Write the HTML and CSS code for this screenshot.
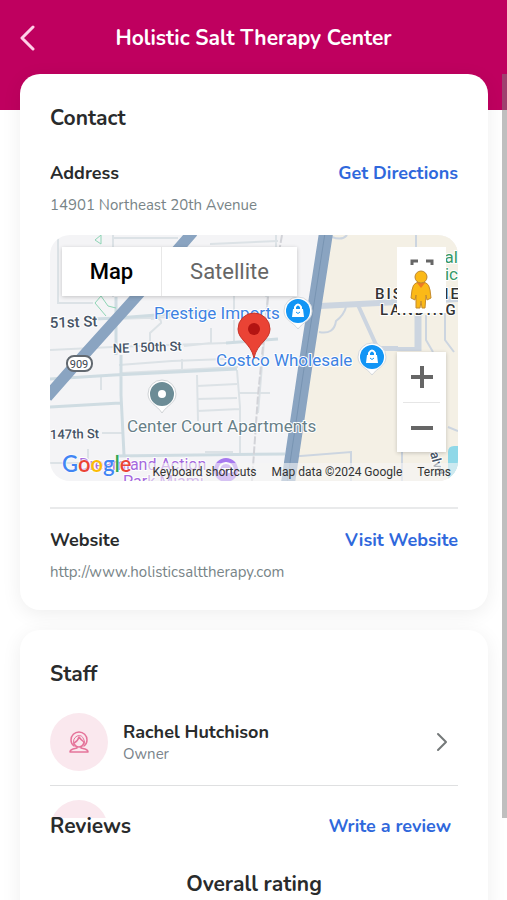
FILE: index.html
```html
<!DOCTYPE html>
<html lang="en">
<head>
    <meta charset="UTF-8">
    <meta name="viewport" content="width=device-width, initial-scale=1.0">
    <title>Holistic Salt Therapy Center</title>
    <link rel="stylesheet" href="styles.css">
</head>
<body>
    <div class="page">
        <header class="header">
            <div class="header-bar">
                <button class="back-button" type="button" aria-label="Back">
                    <svg width="16" height="26" viewBox="0 0 16 26"><path d="M13 2 2 13l11 11" fill="none" stroke="#ffd0e8" stroke-width="3" stroke-linecap="round" stroke-linejoin="round"/></svg>
                </button>
                <h1 class="header-title">Holistic Salt Therapy Center</h1>
            </div>
        </header>

        <main class="content">
            <!-- Contact -->
            <section class="card">
                <h2 class="card-title">Contact</h2>

                <div class="info-row">
                    <h3 class="info-title">Address</h3>
                    <a class="action-link" href="#directions">Get Directions</a>
                </div>
                <p class="info-text">14901 Northeast 20th Avenue</p>

                <div class="map">
                    <svg class="map-canvas" viewBox="0 0 408 246" preserveAspectRatio="xMidYMid slice">
                        <rect width="408" height="246" fill="#f4f4f6"/>
                        <path d="M275 0H408V246H238L255 125Z" fill="#f4f0e5"/>

                        <!-- small streets -->
                        <g fill="none" stroke="#dce2e6" stroke-width="2">
                            <path d="M63 0V62M8 4V68H43M64 3H128M160 9 228 6M0 115 63 112 176 108M66 84 122 82M69 130 122 126 176 124M101 84Q112 82 111 88L100 98V108M161 93V108L134 111M132 124V138M72 138 188 132M51 142V155M184 60V108M147 140 148 186M147 151 187 149M147 164 187 163M147 176 190 174M187 135 190 172V218M188 158H220M52 198H72M38 214V224M0 228H32M155 217H183M218 60 208 178M226 0V22L216 62"/>
                        </g>
                        <g fill="none" stroke="#cfdce2" stroke-width="3">
                            <path d="M0 144 64 140 187 134M0 172 70 168M71 120V160L74 220M66 62V120M44 84 67 83 160 76M66 221 235 219M176 108 228 104"/>
                        </g>
                        <g fill="none" stroke="#ccd5e0" stroke-width="2">
                            <path d="M366 0V70M395 75V105L404 117M376 80V105L383 117M238 222 301 217V246M352 215V246M398 192 408 196M328 112H348M269 97Q284 100 286 86Q294 80 296 72M282 2Q292 6 297 0"/>
                            <path d="M308 70 328 114H366" stroke-width="4"/>
                            <path d="M270 71 408 64" stroke-width="6"/>
                            <path d="M368 70V116" stroke-width="7"/>
                        </g>
                        <path d="M51 0 45 5 51 9ZM51 61 45 68 56 81M51 61 58 71 66 73" fill="none" stroke="#8dd4b4" stroke-width="1"/>
                        <path d="M218 62 208 160 202 246M232 0 225 40" fill="none" stroke="#d2d3d8" stroke-width="2" stroke-dasharray="8 2"/>

                        <!-- highways -->
                        <path d="M143-3 88 60 34 120-3 162" fill="none" stroke="#8aa4c1" stroke-width="11"/>
                        <path d="M276-2 257 120 238 248" fill="none" stroke="#8aa4c1" stroke-width="14"/>
                        <path d="M275-2 256 120 237 248" fill="none" stroke="#7894b2" stroke-width="1"/>
                        <path d="M398 246V217Q398 211 404 211H408V246Z" fill="#8fd8e8"/>

                        <g class="label-street">
                            <text x="0" y="93" font-size="15" transform="rotate(-2 0 93)">51st St</text>
                            <text x="63" y="118" font-size="13" transform="rotate(-2 63 118)">NE 150th St</text>
                            <text x="0" y="204" font-size="13" transform="rotate(-1 0 204)">147th St</text>
                            <text x="380" y="218" font-size="13" transform="rotate(75 380 218)">alvd</text>
                        </g>
                        <rect x="17" y="121" width="25" height="15" rx="7" fill="#fff" stroke="#626970" stroke-width="2"/>
                        <text x="29" y="133" class="label-shield">909</text>

                        <g class="label-area">
                            <text x="325" y="64">BISCAYNE</text>
                            <text x="330" y="80">LANDING</text>
                        </g>
                        <g class="label-park">
                            <text x="408" y="28">al</text>
                            <text x="408" y="45">ic</text>
                        </g>

                        <g class="label-shop">
                            <text x="104" y="84">Prestige Imports</text>
                            <text x="166" y="131">Costco Wholesale</text>
                        </g>
                        <text x="77" y="197" class="label-home">Center Court Apartments</text>
                        <g class="label-fun">
                            <text x="29" y="235">Dreamland Action</text>
                            <text x="73" y="252">Park Miami</text>
                        </g>

                        <!-- place pins -->
                        <g id="shop-pin">
                            <path d="M248 62A14 14 0 0 1 262 76C262 85 253 87 248 94 243 87 234 85 234 76A14 14 0 0 1 248 62Z" fill="#fff" stroke="#d5d8dc"/>
                            <circle cx="248" cy="76" r="12" fill="#1295f5"/>
                            <path d="M243 74H253L254 82H242Z" fill="#fff"/>
                            <path d="M245 75V72Q248 67 251 72V75" fill="none" stroke="#fff" stroke-width="2"/>
                            <path d="M246 77Q248 80 250 77" fill="none" stroke="#1295f5"/>
                        </g>
                        <use href="#shop-pin" x="74" y="46"/>
                        <path d="M112 145A14 14 0 0 1 126 159C126 168 117 170 112 178 107 170 98 168 98 159A14 14 0 0 1 112 145Z" fill="#fff" stroke="#d0d3d6"/>
                        <circle cx="112" cy="159" r="8" fill="none" stroke="#6c8c96" stroke-width="8"/>
                        <circle cx="176" cy="235" r="12" fill="#a779ef"/>
                        <path d="M169 237Q169 228 176 228T183 237M173 238V234H179V238" fill="none" stroke="#fff" stroke-width="2"/>
                        <path d="M204 78A16 16 0 0 1 220 94C220 105 207 108 204 123 201 108 188 105 188 94A16 16 0 0 1 204 78Z" fill="#ea4335" stroke="#c5352b"/>
                        <circle cx="204" cy="94" r="6" fill="#b31412"/>
                    </svg>

                    <div class="map-types">
                        <button class="map-type active" type="button">Map</button>
                        <button class="map-type" type="button">Satellite</button>
                    </div>

                    <button class="map-pegman" type="button" aria-label="Street view">
                        <svg width="49" height="66" viewBox="0 0 49 66">
                            <path d="M15 18V14H21M29 14H35V18" fill="none" stroke="#666" stroke-width="3"/>
                            <path d="M19 36Q24 33 29 36Q32 37 33 43L34 51 30 53 29 48 28 61H25L24 54 23 61H19L19 48 18 53 14 51 15 43Q16 37 19 36Z" fill="#fbb917" stroke="#c48b2e"/>
                            <path d="M20 36 24 41 28 36Z" fill="#ee7b22"/>
                            <circle cx="24" cy="30" r="6" fill="#fbb917" stroke="#bd862f"/>
                        </svg>
                    </button>

                    <div class="map-zoom">
                        <button class="zoom-button" type="button" aria-label="Zoom in">
                            <svg width="24" height="24" viewBox="0 0 24 24"><path d="M1 12H23M12 1V23" stroke="#666" stroke-width="4"/></svg>
                        </button>
                        <button class="zoom-button" type="button" aria-label="Zoom out">
                            <svg width="24" height="24" viewBox="0 0 24 24"><path d="M1 12H23" stroke="#666" stroke-width="4"/></svg>
                        </button>
                    </div>

                    <a class="map-logo" href="#google"><span class="blue">G</span><span class="red">o</span><span class="yellow">o</span><span class="blue">g</span><span class="green">l</span><span class="red">e</span></a>
                    <div class="map-legal">
                        <button class="legal-item" type="button">Keyboard shortcuts</button>
                        <span class="legal-item">Map data ©2024 Google</span>
                        <a class="legal-item" href="#terms">Terms</a>
                    </div>
                </div>

                <hr class="divider">

                <div class="info-row">
                    <h3 class="info-title">Website</h3>
                    <a class="action-link" href="#website">Visit Website</a>
                </div>
                <p class="info-text">http://www.holisticsalttherapy.com</p>
            </section>

            <!-- Staff and reviews -->
            <section class="card">
                <h2 class="card-title">Staff</h2>
                <ul class="staff-list">
                    <li>
                        <a class="staff-row" href="#staff">
                            <span class="avatar">
                                <svg width="20" height="22" viewBox="0 0 20 22" fill="none" stroke="#e5749a" stroke-linecap="round" stroke-linejoin="round">
                                    <path d="M5 15Q2 13 2 9A8 8 0 0 1 18 9Q18 13 15 15" stroke-width="1.5"/>
                                    <path d="M5 14Q3 8 8 5Q13 3 15 9L16 13"/>
                                    <path d="M5 12Q9 10 10 6Q12 9 15 11Q14 16 10 16T5 12Z" stroke-width="1.5"/>
                                    <path d="M8 16V17L4 18Q1 19 1 21H19Q19 19 16 18L12 17V16" stroke-width="1.5"/>
                                </svg>
                            </span>
                            <span class="staff-info">
                                <span class="staff-name">Rachel Hutchison</span>
                                <span class="staff-role">Owner</span>
                            </span>
                            <svg class="chevron" width="14" height="22" viewBox="0 0 14 22"><path d="M3 3 11 11 3 19" fill="none" stroke="#747879" stroke-width="2" stroke-linecap="round" stroke-linejoin="round"/></svg>
                        </a>
                    </li>
                    <li>
                        <a class="staff-row" href="#staff-next" aria-label="Next staff member">
                            <span class="avatar"></span>
                        </a>
                    </li>
                </ul>

                <div class="reviews-row">
                    <h2 class="card-title">Reviews</h2>
                    <a class="action-link" href="#review">Write a review</a>
                </div>
                <h2 class="rating-title">Overall rating</h2>
            </section>
        </main>
        <div class="scroll-thumb"></div>
    </div>
</body>
</html>
```
FILE: styles.css
```css
* {
    box-sizing: border-box;
}
body {
    margin: 0;
    font-family: Nunito, Lato, sans-serif;
    color: #292b2c;
    background-color: #fff;
}
h1, h2, h3, p, ul {
    margin: 0;
    padding: 0;
}
button {
    padding: 0;
    border: none;
    background: none;
    cursor: pointer;
}
a {
    text-decoration: none;
}
.page {
    position: relative;
    height: 100vh;
    overflow: hidden;
}
.header {
    height: 110px;
    background-color: #bf005f;
}
.header-bar {
    display: grid;
    grid-template-columns: 36px 1fr 36px;
    align-items: center;
    height: 76px;
    padding: 0 20px;
}
.back-button {
    display: flex;
}
.header-title {
    font-size: 21px;
    line-height: 28px;
    font-weight: 700;
    text-align: center;
    color: #fff;
}
.content {
    display: flex;
    flex-direction: column;
    gap: 20px;
    margin-top: -36px;
    padding: 0 19px 0 20px;
}
.card {
    padding: 30px 30px 28px;
    border-radius: 20px;
    background-color: #fff;
    box-shadow: 0 4px 20px rgba(0, 0, 0, 0.07);
}
.card-title, .rating-title {
    font-size: 21px;
    line-height: 28px;
    font-weight: 700;
}
.info-row {
    display: flex;
    justify-content: space-between;
    align-items: center;
}
.card-title + .info-row {
    margin-top: 29px;
}
.info-title, .action-link, .staff-name {
    font-size: 18px;
    line-height: 24px;
    font-weight: 700;
}
.action-link {
    color: #2f68dc;
}
.info-text {
    margin-top: 10px;
    font-size: 15px;
    line-height: 20px;
    color: #788487;
}
.divider {
    height: 2px;
    margin: 26px 0 19px;
    border: none;
    background-color: #e9eaeb;
}

/* Map */
.map {
    position: relative;
    height: 246px;
    margin-top: 20px;
    border-radius: 20px;
    overflow: hidden;
    font-family: Roboto, sans-serif;
}
.map-canvas {
    display: block;
    width: 100%;
    height: 100%;
}
.map-canvas text {
    paint-order: stroke;
    stroke: #fff;
    stroke-width: 2px;
    stroke-linejoin: round;
}
.label-street {
    font-weight: 500;
    fill: #465466;
}
.label-shield {
    font-size: 11px;
    text-anchor: middle;
    fill: #3c4650;
}
.label-area {
    font-size: 15px;
    font-weight: 500;
    letter-spacing: 2px;
    fill: #333;
}
.label-park {
    font-size: 17px;
    text-anchor: end;
    fill: #369867;
}
.label-shop {
    font-size: 17px;
    fill: #3d82e2;
}
.label-home {
    font-size: 17px;
    fill: #687f88;
}
.label-fun {
    font-size: 16px;
    fill: #a568dd;
}
.map-types {
    position: absolute;
    top: 12px;
    left: 12px;
    display: flex;
    height: 49px;
    background-color: #fff;
    box-shadow: 0 1px 4px rgba(0, 0, 0, 0.2);
}
.map-type {
    width: 99px;
    font-family: Roboto, sans-serif;
    font-size: 22px;
    color: #666;
}
.map-type.active {
    font-weight: 500;
    color: #000;
}
.map-type + .map-type {
    width: 136px;
    border-left: 1px solid #e8e8e8;
}
.map-pegman {
    position: absolute;
    top: 12px;
    right: 12px;
    display: flex;
    background-color: #fff;
}
.map-zoom {
    position: absolute;
    right: 12px;
    bottom: 29px;
    width: 49px;
    padding: 0 6px;
    background-color: #fff;
    box-shadow: 0 1px 4px rgba(0, 0, 0, 0.2);
}
.zoom-button {
    display: flex;
    justify-content: center;
    align-items: center;
    width: 100%;
    height: 50px;
}
.zoom-button + .zoom-button {
    border-top: 1px solid #e6e6e6;
}
.map-logo {
    position: absolute;
    left: 12px;
    bottom: 3px;
    font-family: Lato, sans-serif;
    font-size: 22px;
    line-height: 28px;
    font-weight: 600;
    text-shadow: 0 0 2px #fff, 0 0 2px #fff;
}
.map-logo .blue {
    color: #4285f4;
}
.map-logo .red {
    color: #ea4335;
}
.map-logo .yellow {
    color: #fbbc05;
}
.map-logo .green {
    color: #34a853;
}
.map-legal {
    position: absolute;
    right: 0;
    bottom: 0;
    display: flex;
    gap: 15px;
    padding: 0 7px 0 4px;
    background-color: rgba(245, 245, 245, 0.6);
}
.legal-item {
    font-family: Roboto, sans-serif;
    font-size: 12px;
    line-height: 18px;
    color: #333;
}

/* Staff */
.staff-list {
    height: 105px;
    margin-top: 25px;
    overflow: hidden;
    list-style: none;
}
.staff-row {
    display: flex;
    align-items: center;
    gap: 15px;
    margin-bottom: 14px;
    padding: 0 9px 14px 0;
    border-bottom: 1px solid #dfe0e1;
}
.avatar {
    display: flex;
    justify-content: center;
    align-items: center;
    width: 58px;
    height: 58px;
    border-radius: 50%;
    background-color: #fae8ee;
}
.staff-info {
    display: flex;
    flex: 1;
    flex-direction: column;
}
.staff-name {
    color: #292b2c;
}
.staff-role {
    font-size: 15px;
    line-height: 20px;
    color: #7a848b;
}
.reviews-row {
    display: flex;
    justify-content: space-between;
    align-items: center;
    margin-top: -6px;
    padding-right: 7px;
}
.rating-title {
    margin-top: 30px;
    text-align: center;
}
.scroll-thumb {
    position: absolute;
    top: 74px;
    right: 0;
    width: 5px;
    height: 744px;
    background-color: rgba(128, 128, 128, 0.5);
}
```
